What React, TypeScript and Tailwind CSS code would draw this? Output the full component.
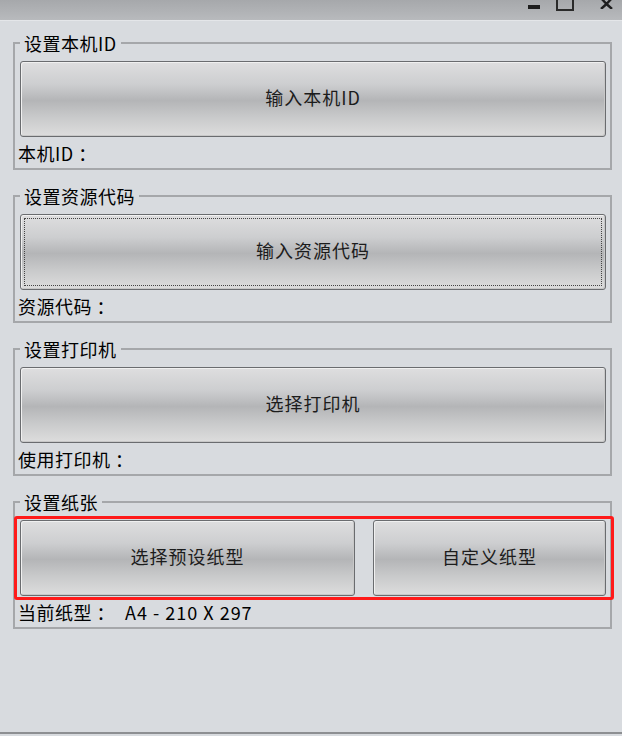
const font = { fontFamily: '"Noto Sans CJK SC", "Liberation Sans", sans-serif' };

function WinButton({ label, focused, className }: { label: string; focused?: boolean; className?: string }) {
  return (
    <button
      className={
        "relative h-[76px] rounded-[3px] border border-[#6a6c6f] bg-[linear-gradient(to_bottom,#dededf_0%,#cdced0_30%,#b4b5b7_52%,#c9cacb_75%,#dddddd_100%)] pb-[4px] text-[18px] leading-[20px] tracking-[1px] text-[#1c1c1c] shadow-[inset_1px_1px_0_#f0f0f0,inset_-1px_-1px_0_#c8c8c8] " +
        (className ?? "")
      }
    >
      {focused && (
        <span className="absolute inset-[3px] border border-dotted border-[#444]" />
      )}
      {label}
    </button>
  );
}

function Group({ title, children, first }: { title: string; children: React.ReactNode; first?: boolean }) {
  return (
    <fieldset
      className={
        "w-[599px] border-2 border-[#a5a7aa] pl-[3px] pr-[4px] pt-[8px] pb-[5px] " + (first ? "mt-[12px]" : "mt-[16px]")
      }
    >
      <legend className="ml-[2px] px-1 text-[18px] leading-[20px] tracking-[0.5px] text-black">{title}</legend>
      {children}
    </fieldset>
  );
}

function Label({ children }: { children: React.ReactNode }) {
  return <div className="mt-[6px] flex text-[18px] leading-[20px] tracking-[0.5px] text-black">{children}</div>;
}

export default function App() {
  return (
    <div style={font} className="flex h-[736px] w-[622px] flex-col overflow-hidden bg-[#d8dbdf]">
      <div className="relative h-[21px] shrink-0 border-b border-[#e4e6e9] bg-[linear-gradient(to_bottom,#a6a8ab,#b8babd)]">
        <div className="absolute right-[7px] top-[-3px] flex items-start gap-[16px]">
          <div className="mt-[8px] h-[4px] w-[12px] bg-[#1e1e1e]" />
          <div className="h-[14px] w-[18px] border-2 border-[#2a2a2a]" />
          <svg width="17" height="12" viewBox="0 0 17 12" className="ml-[8px]">
            <path d="M2 0 L8.5 7 L15 0 M8.5 7 L3 12 M8.5 7 L14 12" stroke="#1e1e1e" strokeWidth="2.4" fill="none" />
          </svg>
        </div>
      </div>

      <div className="flex flex-col pl-[13px]">
        <Group title="设置本机ID" first>
          <WinButton label="输入本机ID" className="ml-[2px] w-[586px]" />
          <Label>本机ID ：</Label>
        </Group>

        <Group title="设置资源代码">
          <WinButton label="输入资源代码" focused className="ml-[2px] w-[586px]" />
          <Label>资源代码 ：</Label>
        </Group>

        <Group title="设置打印机">
          <WinButton label="选择打印机" className="ml-[2px] w-[586px]" />
          <Label>使用打印机 ：</Label>
        </Group>

        <Group title="设置纸张">
          <div className="relative ml-[2px] flex gap-[18px]">
            <WinButton label="选择预设纸型" className="w-[335px]" />
            <WinButton label="自定义纸型" className="w-[233px]" />
            <div className="pointer-events-none absolute left-[-6px] right-[-8px] top-[-4px] bottom-[-4px] rounded-[3px] border-[3px] border-[#ff1a1a]" />
          </div>
          <Label>
            <span>当前纸型 ：</span>
            <span className="ml-[10px] tracking-[1px]">A4 - 210 X 297</span>
          </Label>
        </Group>
      </div>

      <div className="flex-1" />
      <div className="h-[4px] shrink-0 border-t-2 border-[#8d8f92] bg-[#d8dbdf]" />
    </div>
  );
}
